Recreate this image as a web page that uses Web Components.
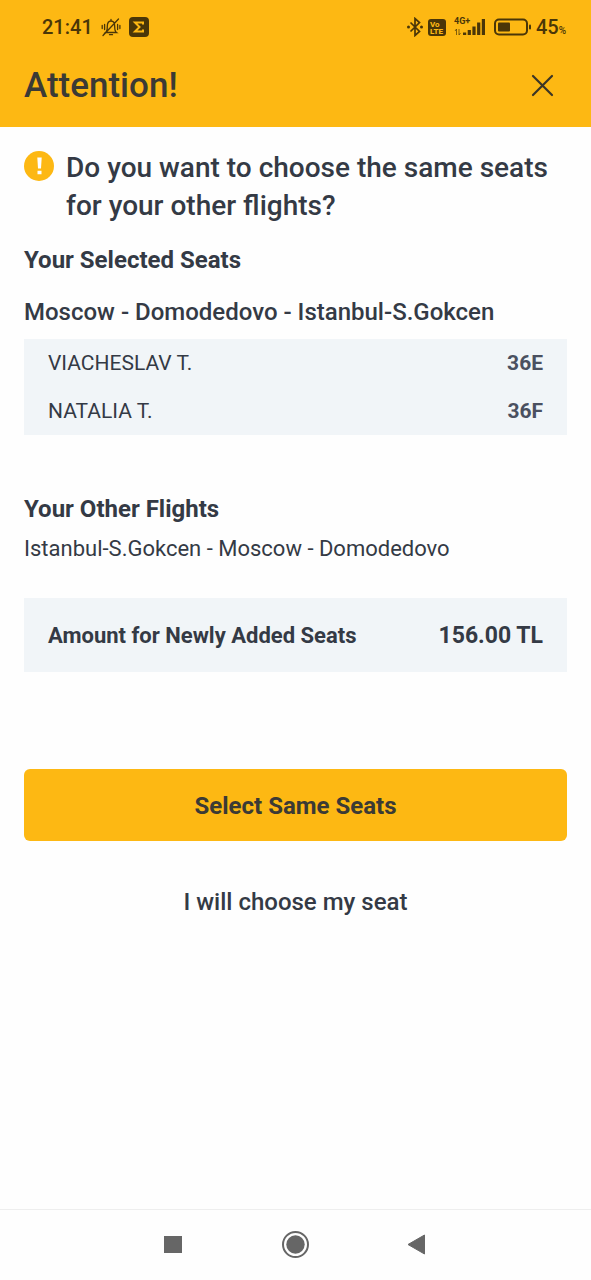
<!DOCTYPE html>
<html lang="en">
<head>
<meta charset="utf-8">
<meta name="viewport" content="width=device-width, initial-scale=1">
<title>Seat selection</title>
<style>
  body { margin: 0; font-family: Roboto, "Noto Sans", sans-serif; color: #343a45; background: #fefefe; }
</style>
</head>
<body>
<seat-screen></seat-screen>
<script>
const define = (name, html) => customElements.define(name, class extends HTMLElement {
  constructor() {
    super();
    const template = document.createElement('template');
    template.innerHTML = html;
    this.attachShadow({ mode: 'open' }).append(template.content.cloneNode(true));
  }
});

define('status-bar', `
<style>
  :host { display: flex; justify-content: space-between; align-items: center; height: 54px; padding: 0 25px 0 42px; color: #4a3608; font-weight: 500; font-size: 20px; line-height: 24px; }
  div { display: flex; align-items: center; }
  svg { display: block; flex: none; }
  .left { gap: 8px; }
  .right { gap: 8px; }
  .radio { gap: 5px; }
  .charge { display: block; }
  small { font-size: 10px; line-height: 10px; }
  .battery { gap: 4px; }
</style>
<div class="left">
  <time>21:41</time>
  <svg width="20" height="20" viewBox="0 0 20 20" fill="none" stroke="currentColor" stroke-width="1.3" stroke-linecap="round" aria-label="Muted">
    <path d="M4.500 15.500h11c-1.500-1-1.800-2.500-1.800-6C13.700 6 12.500 4 10 4S6.300 6 6.300 9.500c0 3.500-.3 5-1.800 6zM8.500 17.700h3M10 2.500V4M3.600 7.500v5M1.200 8.500v3M16.600 7.500v5M18.900 8.500v3M2 18.500L17.500 2"/>
  </svg>
  <svg width="20" height="20" viewBox="0 0 20 20" aria-hidden="true">
    <rect width="20" height="20" rx="4" fill="#4a3608"/>
    <path d="M14 7.500V5.500H6L10.500 10 6 14.500h8v-2" fill="none" stroke="#fdb813" stroke-width="2"/>
  </svg>
</div>
<div class="right">
  <div class="radio">
    <svg width="16" height="20" viewBox="0 0 16 20" fill="none" stroke="currentColor" stroke-width="1.700" aria-label="Bluetooth">
      <path d="M3.500 5.500l9 9L8 18.500v-17l4.500 4-9 9"/>
      <circle cx="1.500" cy="10" r="1.500" fill="currentColor" stroke="none"/><circle cx="14.500" cy="10" r="1.500" fill="currentColor" stroke="none"/>
    </svg>
    <svg width="18" height="18" viewBox="0 0 18 18" font-family="Roboto" font-weight="800" font-size="8" fill="#fdb813">
      <rect y="1" width="18" height="17" rx="3" fill="#4a3608"/>
      <text x="2" y="9">Vo</text><text x="2" y="16">LTE</text>
    </svg>
  </div>
  <svg width="32" height="20" viewBox="0 0 32 20" fill="currentColor">
    <text x="0" y="7" font-family="Roboto" font-weight="700" font-size="9">4G+</text>
    <path d="M9 15.500h3.200v2.500H9zM13.700 13h3.200v5h-3.200zM18.400 9.500h3.200v8.500h-3.200zM23.100 5.500h3.200V18h-3.200zM27.800 2h3.200v16h-3.200z"/>
    <path d="M2.500 18v-6l-1.500 2M5 12v6l1.500-2" fill="none" stroke="currentColor" stroke-width="1" opacity=".7"/>
  </svg>
  <div class="battery">
    <svg width="38" height="18" viewBox="0 0 38 18">
      <rect x="1" y="1.500" width="32" height="15" rx="4" fill="none" stroke="currentColor" stroke-width="2"/>
      <rect x="4" y="4.500" width="12" height="9" rx="1" fill="currentColor"/>
      <rect x="35" y="6.500" width="2" height="5" rx="1" fill="currentColor"/>
    </svg>
    <span class="charge">45<small>%</small></span>
  </div>
</div>`);

define('dialog-header', `
<style>
  :host { display: flex; justify-content: space-between; align-items: center; padding: 9px 32px 18px 24px; }
  h1 { margin: 0; font-size: 35px; line-height: 46px; font-weight: 500; color: #3b3a35; }
  button { display: flex; padding: 4px; border: 0; background: none; color: #3b3526; }
</style>
<h1><slot></slot></h1>
<button type="button" aria-label="Close">
  <svg width="26" height="26" viewBox="0 0 26 26" fill="none" stroke="currentColor" stroke-width="2.200" stroke-linecap="round"><path d="M4 3l19 19M23 3l-19 19"/></svg>
</button>`);

define('question-notice', `
<style>
  :host { display: flex; align-items: flex-start; gap: 12px; }
  svg { flex: none; margin-top: 2px; }
  h2 { margin: 0; font-size: 28px; line-height: 38px; font-weight: 500; }
</style>
<svg width="30" height="30" viewBox="0 0 30 30" aria-hidden="true">
  <circle cx="15" cy="15" r="15" fill="#fdb813"/>
  <path d="M13.300 6.500h4.400l-.7 11h-3zM13.500 19.800h4v3.400h-4z" fill="#fff"/>
</svg>
<h2><slot></slot></h2>`);

define('selected-seats', `
<style>
  :host { display: block; }
  h3 { margin: 0 0 20px; font-size: 24px; line-height: 32px; font-weight: 700; }
  table { width: 100%; border-collapse: collapse; background: #f1f5f8; font-size: 21px; line-height: 24px; }
  caption { margin-bottom: 11px; text-align: left; font-size: 24px; line-height: 32px; font-weight: 500; }
  th, td { padding: 12px 24px; }
  th { text-align: left; font-weight: 400; }
  td { text-align: right; font-weight: 700; color: #4a5060; }
</style>
<h3>Your Selected Seats</h3>
<table>
  <caption>Moscow - Domodedovo - Istanbul-S.Gokcen</caption>
  <tbody>
    <tr><th scope="row">VIACHESLAV T.</th><td>36E</td></tr>
    <tr><th scope="row">NATALIA T.</th><td>36F</td></tr>
  </tbody>
</table>`);

define('other-flights', `
<style>
  :host { display: block; }
  h3 { margin: 0 0 8px; font-size: 24px; line-height: 32px; font-weight: 700; }
  p { margin: 0; font-size: 22px; line-height: 32px; }
</style>
<h3>Your Other Flights</h3>
<p>Istanbul-S.Gokcen - Moscow - Domodedovo</p>`);

define('amount-row', `
<style>
  :host { display: flex; justify-content: space-between; gap: 16px; padding: 22px 24px 20px; background: #f1f5f8; font-size: 22px; line-height: 32px; font-weight: 700; }
  .value { font-size: 23px; }
</style>
<span><slot></slot></span><span class="value"><slot name="value"></slot></span>`);

define('action-button', `
<style>
  :host { display: block; }
  button { display: block; width: 100%; padding: 21px 24px 19px; border: 0; border-radius: 6px; background: none; color: inherit; font: 500 24px/32px Roboto, "Noto Sans", sans-serif; }
  :host([primary]) button { background: #fdb813; color: #3b3a35; font-weight: 700; }
</style>
<button type="button"><slot></slot></button>`);

define('nav-bar', `
<style>
  :host { display: flex; justify-content: center; border-top: 1px solid #eee; }
  button { width: 122px; height: 70px; padding: 0; border: 0; background: none; color: #666; }
  svg { display: block; margin: 0 auto; }
</style>
<button type="button" aria-label="Recent apps"><svg width="28" height="28" viewBox="0 0 28 28" fill="currentColor"><path d="M4 5h18v17H4z"/></svg></button>
<button type="button" aria-label="Home"><svg width="28" height="28" viewBox="0 0 28 28"><circle cx="13.500" cy="13.500" r="12.500" fill="none" stroke="currentColor" stroke-width="2"/><circle cx="13.500" cy="13.500" r="9.200" fill="currentColor"/></svg></button>
<button type="button" aria-label="Back"><svg width="28" height="28" viewBox="0 0 28 28" fill="currentColor" stroke="currentColor" stroke-linejoin="round"><path d="M4 13.500L20.500 4v19z"/></svg></button>`);

define('seat-screen', `
<style>
  :host { display: flex; flex-direction: column; min-height: 100vh; }
  header { background: #fdb813; }
  main { flex: 1; padding: 22px 24px; }
  selected-seats { margin-top: 19px; }
  other-flights { margin-top: 58px; }
  amount-row { margin-top: 33px; }
  .actions { display: grid; gap: 24px; margin-top: 97px; }
</style>
<header>
  <status-bar></status-bar>
  <dialog-header>Attention!</dialog-header>
</header>
<main>
  <question-notice>Do you want to choose the same seats for your other flights?</question-notice>
  <selected-seats></selected-seats>
  <other-flights></other-flights>
  <amount-row>Amount for Newly Added Seats<span slot="value">156.00 TL</span></amount-row>
  <div class="actions">
    <action-button primary>Select Same Seats</action-button>
    <action-button>I will choose my seat</action-button>
  </div>
</main>
<nav-bar></nav-bar>`);
</script>
</body>
</html>
